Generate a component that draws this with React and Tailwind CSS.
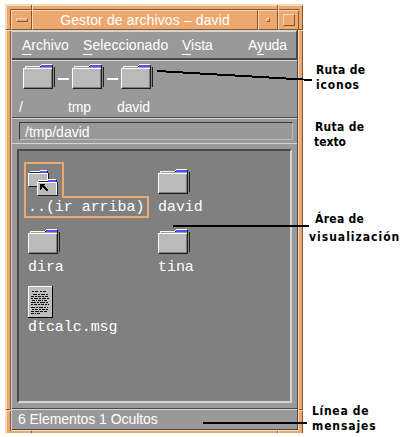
import React from "react";

const sans = "font-['Liberation_Sans',Arial,sans-serif] whitespace-nowrap text-white";
const mono = "font-['Liberation_Mono','Courier_New',monospace] whitespace-pre text-white text-[15px] leading-[17px] tracking-[-0.05px]";

function FolderIcon() {
  return (
    <svg width="32" height="25" viewBox="0 0 32 25" shapeRendering="crispEdges" className="block shrink-0">
      <path d="M2 2h16v-1h11v2h2v20h-2v1H2z" fill="#202020" />
      <path d="M2 2h15v2H2z" fill="#f8f8f8" />
      <path d="M3 3h26v20H3z" fill="#9a9a9a" />
      <path d="M18 0h11v1H19v1h-2v-1h1z" fill="#fff" />
      <path d="M18 1h11v2H18z" fill="#5050ff" />
      <path d="M29 1h1v2h-1z" fill="#202020" />
      <path d="M0 4h29v20H0z" fill="#fff" />
      <path d="M1 5h28v18H1z" fill="#bababa" />
      <path d="M28 5h1v18h-1zM1 23h28v1H1z" fill="#7c7c7c" />
      <path d="M29 4h1v20h-1zM1 24h29v1H1z" fill="#202020" />
      <path d="M30 3h1v20h-1z" fill="#888" />
      <path d="M31 3h1v20h-1z" fill="#202020" />
    </svg>
  );
}

function ParentIcon() {
  return (
    <svg width="31" height="27" viewBox="0 0 31 27" shapeRendering="crispEdges" className="block">
      <path d="M2 1h18v2h1v13H2z" fill="#202020" />
      <path d="M2 1h10v-1h7v1h-6v1H2z" fill="#fff" />
      <path d="M12 1h7v2h-7z" fill="#5050ff" />
      <path d="M0 3h20v13H0z" fill="#fff" />
      <path d="M1 4h18v12H1z" fill="#bababa" />
      <path d="M1 16h19v1H1z" fill="#202020" />
      <path d="M11 10h18v2h1v13H11z" fill="#202020" />
      <path d="M10 10h10v-1h8v1h-6v1H10z" fill="#fff" />
      <path d="M20 10h8v2h-8z" fill="#5050ff" />
      <path d="M9 12h20v13H9z" fill="#fff" />
      <path d="M10 13h18v12H10z" fill="#bababa" />
      <path d="M28 12h1v13h1v-13h-1zM10 25h20v1H10z" fill="#202020" />
      <path d="M11 14h6v1h-1v1h1v1h1v1h1v1h1v2h-2v-1h-1v-1h-1v-1h-1v-1h-1v2h-1v1h-1v-6h-1z" fill="#000" />
    </svg>
  );
}

function DocumentIcon() {
  return (
    <svg width="25" height="32" viewBox="0 0 25 32" shapeRendering="crispEdges" className="block">
      <path d="M0 0h25v32H0z" fill="#000" />
      <path d="M0 0h24v31H0z" fill="#fff" />
      <path d="M1 1h23v30H1z" fill="#bcbcbc" />
      <g stroke="#111" strokeWidth="1" fill="none">
        <path d="M4 5.5h16" strokeDasharray="2 1 3 2" />
        <path d="M5 8.5h16" strokeDasharray="4 1 2 1" />
        <path d="M3 10.5h17" strokeDasharray="3 1 2 1" />
        <path d="M3 12.5h19" strokeDasharray="2 1 4 1" />
        <path d="M4 14.5h16" strokeDasharray="3 1 1 1" />
        <path d="M3 16.5h18" strokeDasharray="5 1 2 1" />
        <path d="M3 18.5h18" strokeDasharray="2 1 3 1" />
        <path d="M3 21.5h17" strokeDasharray="4 1 2 1" />
        <path d="M4 23.5h17" strokeDasharray="2 1 3 1" />
        <path d="M3 25.5h16" strokeDasharray="3 1 4 1" />
        <path d="M3 27.5h9" strokeDasharray="3 1 1 1" />
      </g>
    </svg>
  );
}

function FrameNotches() {
  return (
    <>
      <i className="absolute left-[26px] top-px h-[5px] w-px bg-[#87552f]" />
      <i className="absolute left-[27px] top-px h-[5px] w-px bg-[#fbd9bc]" />
      <i className="absolute left-[272px] top-px h-[5px] w-px bg-[#87552f]" />
      <i className="absolute left-[273px] top-px h-[5px] w-px bg-[#fbd9bc]" />
      <i className="absolute left-px top-[25px] h-px w-[5px] bg-[#87552f]" />
      <i className="absolute left-px top-[26px] h-px w-[5px] bg-[#fbd9bc]" />
      <i className="absolute right-0 top-[25px] h-px w-[4px] bg-[#87552f]" />
      <i className="absolute right-0 top-[26px] h-px w-[4px] bg-[#fbd9bc]" />
      <i className="absolute left-px top-[405px] h-px w-[5px] bg-[#87552f]" />
      <i className="absolute left-px top-[406px] h-px w-[5px] bg-[#fbd9bc]" />
      <i className="absolute right-0 top-[405px] h-px w-[4px] bg-[#87552f]" />
      <i className="absolute right-0 top-[406px] h-px w-[4px] bg-[#fbd9bc]" />
      <i className="absolute bottom-0 left-[26px] h-[2px] w-px bg-[#87552f]" />
      <i className="absolute bottom-0 left-[272px] h-[2px] w-px bg-[#87552f]" />
      <i className="absolute bottom-0 left-[273px] h-[2px] w-px bg-[#fbd9bc]" />
    </>
  );
}

function TitleBar() {
  const cell = "h-[20px] border-t border-l border-t-[#fbd9bc] border-l-[#fbd9bc] border-r border-b border-r-[#87552f] border-b-[#87552f] flex items-center justify-center";
  return (
    <div className="flex h-[20px] bg-[#eda870]">
      <div className={cell + " w-[21px]"}>
        <div className="h-[4px] w-[12px] border border-t-[#fbd9bc] border-l-[#fbd9bc] border-r-[#87552f] border-b-[#87552f]" />
      </div>
      <div className={cell + " w-[226px]"}>
        <span className={sans + " text-[14px] leading-[18px] tracking-[0.12px]"}>Gestor de archivos – david</span>
      </div>
      <div className={cell + " w-[20px]"}>
        <div className="h-[4px] w-[4px] border border-t-[#fbd9bc] border-l-[#fbd9bc] border-r-[#87552f] border-b-[#87552f]" />
      </div>
      <div className={cell + " flex-1"}>
        <div className="h-[12px] w-[12px] border border-t-[#fbd9bc] border-l-[#fbd9bc] border-r-[#87552f] border-b-[#87552f]" />
      </div>
    </div>
  );
}

function MenuItem({ before, letter, after, className }) {
  return (
    <span className={className}>
      {before}
      <span className="underline decoration-1 underline-offset-[4px] [text-decoration-skip-ink:none]">{letter}</span>
      {after}
    </span>
  );
}

function MenuBar() {
  return (
    <div className={"flex h-[30px] border-t-2 border-r border-b-2 border-t-[#d4d4d0] border-r-[#4a4a4a] border-b-[#4a4a4a] pt-[4px] pl-[10px] text-[14px] leading-[18px] " + sans}>
      <MenuItem letter="A" after="rchivo" className="w-[61px]" />
      <MenuItem letter="S" after="eleccionado" className="w-[99px] tracking-[0.1px]" />
      <MenuItem letter="V" after="ista" className="w-[66px]" />
      <MenuItem before="A" letter="y" after="uda" className="tracking-[-0.1px]" />
    </div>
  );
}

function PathItem({ label }) {
  return (
    <div className="w-[32px] shrink-0">
      <FolderIcon />
      <div className={sans + " mt-[9px] -ml-[4px] text-[14px] leading-[18px] tracking-[-0.1px]"}>{label}</div>
    </div>
  );
}

function IconPath() {
  return (
    <div className="h-[58px] border-t border-b border-t-[#d4d4d0] border-b-[#4a4a4a]">
      <div className="flex pt-[3px] pl-[11px]">
        <PathItem label="/" />
        <div className="mx-[3px] mt-[14px] h-[2px] w-[11px] bg-white" />
        <PathItem label="tmp" />
        <div className="mx-[3px] mt-[14px] h-[2px] w-[11px] bg-white" />
        <PathItem label="david" />
      </div>
    </div>
  );
}

function TextPath() {
  return (
    <div className="h-[25px] border-t border-[#d4d4d0] pt-[3px] pl-[7px]">
      <div className={"h-[18px] w-[274px] border border-t-[#303840] border-l-[#303840] border-r-[#b8b8c0] border-b-[#b8b8c0] pl-[5px] text-[14px] leading-[18px] " + sans}>
        /tmp/david
      </div>
    </div>
  );
}

function FileView() {
  return (
    <div className="h-[266px] border-t border-b border-t-[#d4d4d0] border-b-[#4a4a4a] pt-[5px] pl-[5px]">
      <div className="h-[254px] w-[275px] border-2 border-t-[#4a4a4a] border-l-[#4a4a4a] border-r-[#d4d4d4] border-b-[#d4d4d4] bg-[#808080] pt-[11px] pl-[5px]">
        <div className="flex">
          <div className="relative h-[56px] w-[134px]">
            <svg width="125" height="56" className="absolute top-0 left-0" shapeRendering="crispEdges">
              <path d="M1 1H39V35H124V55H1z" fill="none" stroke="#eda870" strokeWidth="2" />
            </svg>
            <div className="pt-[8px] pl-[4px]">
              <ParentIcon />
              <div className={mono + " mt-[2px]"}>..(ir arriba)</div>
            </div>
          </div>
          <div className="h-[56px] pt-[7px]">
            <FolderIcon />
            <div className={mono + " mt-[5px]"}>david</div>
          </div>
        </div>
        <div className="mt-[11px] flex h-[47px] pl-[4px]">
          <div className="w-[130px]">
            <FolderIcon />
            <div className={mono + " mt-[5px]"}>dira</div>
          </div>
          <div>
            <FolderIcon />
            <div className={mono + " mt-[5px]"}>tina</div>
          </div>
        </div>
        <div className="mt-[10px] pl-[4px]">
          <DocumentIcon />
          <div className={mono + " mt-px"}>dtcalc.msg</div>
        </div>
      </div>
    </div>
  );
}

function Desktop() {
  return (
    <div className="relative mt-[4px] ml-[5px] h-[429px] w-[298px] shrink-0 border-t-2 border-l-2 border-r border-t-[#fbd9bc] border-l-[#fbd9bc] border-r-[#87552f] bg-[#eda870] pt-[3px] pr-[3px] pl-[3px]">
      <div className="border-t border-l border-t-[#87552f] border-l-[#87552f]">
        <TitleBar />
        <div className="h-[401px] border-l border-r border-b border-l-[#d4d4d0] border-r-[#fbd9bc] border-b-[#fbd9bc] bg-[#999999]">
          <div className="h-full border-r border-r-[#4a4a4a]">
            <MenuBar />
            <IconPath />
            <TextPath />
            <FileView />
            <div className={"h-[21px] border-t border-b border-t-[#d4d4d0] border-b-[#4a4a4a] pl-[6px] text-[14px] leading-[19px] tracking-[-0.05px] " + sans}>
              6 Elementos 1 Ocultos
            </div>
          </div>
        </div>
      </div>
      <div className="absolute -top-[2px] -left-[2px] h-[429px] w-[298px]">
        <FrameNotches />
      </div>
    </div>
  );
}

function Callouts() {
  return (
    <div className="whitespace-nowrap pt-[63px] font-['DejaVu_Sans_Condensed','DejaVu_Sans',sans-serif] [font-stretch:condensed] text-[12px] leading-[15px] font-bold text-black">
      <div className="h-[57px] pl-[13px] tracking-[0.3px]">
        Ruta de
        <br />
        <span className="tracking-[0.8px]">iconos</span>
      </div>
      <div className="h-[90px] pl-[12px] tracking-[0.3px]">
        Ruta de
        <br />
        <span className="-ml-px tracking-[0]">texto</span>
      </div>
      <div className="h-[194px] pl-[6px] leading-[18px]">
        <span className="ml-[6px] tracking-[0.3px]">Área de</span>
        <br />
        <span className="tracking-[1px]">visualización</span>
      </div>
      <div className="pl-[9px]">
        <span className="tracking-[0.7px]">Línea de</span>
        <br />
        <span className="tracking-[0.9px]">mensajes</span>
      </div>
    </div>
  );
}

export default function App() {
  return (
    <div className="relative flex h-[437px] w-[407px] overflow-hidden bg-[#fefefe]">
      <Desktop />
      <Callouts />
      <svg width="407" height="437" className="pointer-events-none absolute inset-0" shapeRendering="crispEdges">
        <path d="M157 71L312 80" stroke="#000" strokeWidth="2" />
        <path d="M173 226H309M203 423H307" stroke="#000" strokeWidth="2" />
      </svg>
    </div>
  );
}
